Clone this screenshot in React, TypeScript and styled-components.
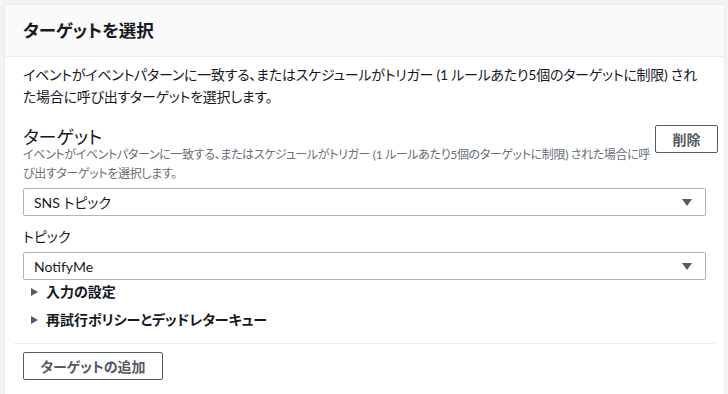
import React from "react";
import styled, { createGlobalStyle } from "styled-components";

const Global = createGlobalStyle`
  html, body { margin: 0; padding: 0; background: #f2f3f3; }
  body {
    font-family: "Lato", "Noto Sans CJK JP", sans-serif;
    font-feature-settings: "palt";
    color: #16191f;
  }
  * { box-sizing: border-box; }
`;

const Page = styled.div`
  padding: 4px 3px 0 4px;
  height: 394px;
  overflow: hidden;
`;

const Card = styled.section`
  background: #fff;
  border: 1px solid #eaeded;
  border-bottom: none;
  height: 390px;
`;

const Header = styled.header`
  background: #fafafa;
  border-bottom: 1px solid #eaeded;
  height: 52px;
  display: flex;
  align-items: center;
  padding: 0 18px;
`;

const Title = styled.h2`
  margin: 0;
  font-size: 17.5px;
  font-weight: 700;
  line-height: 22px;
  color: #16191f;
`;

const Body = styled.div`
  padding: 7px 18px 0 18px;
`;

const Desc = styled.p`
  margin: 0;
  font-size: 14px;
  line-height: 22px;
  letter-spacing: -0.25px;
  color: #16191f;
`;

const Field = styled.div`
  margin-top: 18px;
  display: flex;
  flex-direction: column;
`;

const FieldTop = styled.div`
  display: flex;
  align-items: flex-start;
  justify-content: space-between;
  gap: 2px;
  margin-right: -12px;
`;

const FieldLabel = styled.div`
  font-size: 18px;
  line-height: 22px;
  color: #16191f;
`;

const FieldHint = styled.div`
  font-size: 12px;
  line-height: 19px;
  letter-spacing: -0.35px;
  color: #687078;
  margin-top: -3px;
`;

const SmallLabel = styled.div`
  font-size: 14px;
  line-height: 20px;
  color: #16191f;
  margin: 11px 0 5px 0;
`;

const OutlineButton = styled.button<{ $w: number }>`
  width: ${(p) => p.$w}px;
  height: 28px;
  flex-shrink: 0;
  background: #fff;
  border: 1px solid #545b64;
  border-radius: 2px;
  font-family: inherit;
  font-feature-settings: "palt";
  font-size: 14px;
  font-weight: 700;
  color: #545b64;
  padding: 0;
  margin-top: -1px;
`;

const Select = styled.div<{ $mt?: number }>`
  margin-top: ${(p) => p.$mt ?? 0}px;
  height: 28px;
  border: 1px solid #aab7b8;
  border-radius: 2px;
  display: flex;
  align-items: center;
  justify-content: space-between;
  padding: 0 13px 0 10px;
  font-size: 14px;
  color: #16191f;
`;

const Caret = styled.span`
  width: 0;
  height: 0;
  border-left: 5px solid transparent;
  border-right: 5px solid transparent;
  border-top: 7px solid #545b64;
`;

const Expander = styled.div<{ $mt: number }>`
  margin-top: ${(p) => p.$mt}px;
  display: flex;
  align-items: center;
  gap: 8px;
  padding-left: 8px;
  font-size: 14px;
  font-weight: 700;
  line-height: 20px;
  color: #16191f;
`;

const RightTri = styled.span`
  width: 0;
  height: 0;
  border-top: 4.5px solid transparent;
  border-bottom: 4.5px solid transparent;
  border-left: 7px solid #545b64;
`;

const Divider = styled.hr`
  margin: 13px -9px 9px -9px;
  border: none;
  border-top: 1px solid #eaeded;
`;

export default function App() {
  return (
    <>
      <Global />
      <Page>
        <Card>
          <Header>
            <Title>ターゲットを選択</Title>
          </Header>
          <Body>
            <Desc>
              イベントがイベントパターンに一致する、またはスケジュールがトリガー (1 ルールあたり5個のターゲットに制限) された場合に呼び出すターゲットを選択します。
            </Desc>
            <Field>
              <FieldTop>
                <div>
                  <FieldLabel>ターゲット</FieldLabel>
                  <FieldHint>
                    イベントがイベントパターンに一致する、またはスケジュールがトリガー (1 ルールあたり5個のターゲットに制限) された場合に呼び出すターゲットを選択します。
                  </FieldHint>
                </div>
                <OutlineButton $w={63}>削除</OutlineButton>
              </FieldTop>
              <Select $mt={5}>
                <span>SNS トピック</span>
                <Caret />
              </Select>
              <SmallLabel>トピック</SmallLabel>
              <Select>
                <span>NotifyMe</span>
                <Caret />
              </Select>
              <Expander $mt={2}>
                <RightTri />
                入力の設定
              </Expander>
              <Expander $mt={8}>
                <RightTri />
                再試行ポリシーとデッドレターキュー
              </Expander>
            </Field>
            <Divider />
            <OutlineButton $w={140}>ターゲットの追加</OutlineButton>
          </Body>
        </Card>
      </Page>
    </>
  );
}
